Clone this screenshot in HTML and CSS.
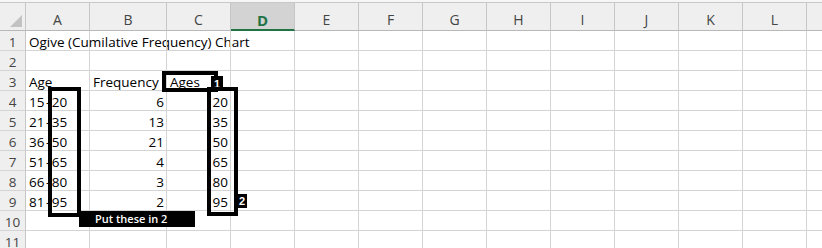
FILE: index.html
```html
<!DOCTYPE html>
<html>
<head>
	<title>Ogive</title>
	<link rel="stylesheet" href="styles.css">
</head>
<body>
	<div class="topline"></div>
	<div class="sheet">
		<div class="row head">
			<div class="rh corner"><span class="tri"></span></div>
			<div class="ch">A</div><div class="ch wide">B</div><div class="ch">C</div><div class="ch sel">D</div>
			<div class="ch">E</div><div class="ch">F</div><div class="ch">G</div><div class="ch">H</div>
			<div class="ch">I</div><div class="ch">J</div><div class="ch">K</div><div class="ch">L</div><div class="ch"></div>
		</div>
		<div class="row">
			<div class="rh">1</div>
			<div class="c">Ogive (Cumilative Frequency) Chart</div><div class="c wide"></div><div class="c"></div><div class="c"></div>
			<div class="c"></div><div class="c"></div><div class="c"></div><div class="c"></div>
			<div class="c"></div><div class="c"></div><div class="c"></div><div class="c"></div><div class="c"></div>
		</div>
		<div class="row">
			<div class="rh">2</div>
			<div class="c"></div><div class="c wide"></div><div class="c"></div><div class="c"></div>
			<div class="c"></div><div class="c"></div><div class="c"></div><div class="c"></div>
			<div class="c"></div><div class="c"></div><div class="c"></div><div class="c"></div><div class="c"></div>
		</div>
		<div class="row">
			<div class="rh">3</div>
			<div class="c">Age</div><div class="c wide">Frequency</div><div class="c">Ages</div><div class="c"></div>
			<div class="c"></div><div class="c"></div><div class="c"></div><div class="c"></div>
			<div class="c"></div><div class="c"></div><div class="c"></div><div class="c"></div><div class="c"></div>
		</div>
		<div class="row">
			<div class="rh">4</div>
			<div class="c range">15 - 20</div><div class="c wide num">6</div><div class="c num">20</div><div class="c"></div>
			<div class="c"></div><div class="c"></div><div class="c"></div><div class="c"></div>
			<div class="c"></div><div class="c"></div><div class="c"></div><div class="c"></div><div class="c"></div>
		</div>
		<div class="row">
			<div class="rh">5</div>
			<div class="c range">21 - 35</div><div class="c wide num">13</div><div class="c num">35</div><div class="c"></div>
			<div class="c"></div><div class="c"></div><div class="c"></div><div class="c"></div>
			<div class="c"></div><div class="c"></div><div class="c"></div><div class="c"></div><div class="c"></div>
		</div>
		<div class="row">
			<div class="rh">6</div>
			<div class="c range">36 - 50</div><div class="c wide num">21</div><div class="c num">50</div><div class="c"></div>
			<div class="c"></div><div class="c"></div><div class="c"></div><div class="c"></div>
			<div class="c"></div><div class="c"></div><div class="c"></div><div class="c"></div><div class="c"></div>
		</div>
		<div class="row">
			<div class="rh">7</div>
			<div class="c range">51 - 65</div><div class="c wide num">4</div><div class="c num">65</div><div class="c"></div>
			<div class="c"></div><div class="c"></div><div class="c"></div><div class="c"></div>
			<div class="c"></div><div class="c"></div><div class="c"></div><div class="c"></div><div class="c"></div>
		</div>
		<div class="row">
			<div class="rh">8</div>
			<div class="c range">66 - 80</div><div class="c wide num">3</div><div class="c num">80</div><div class="c"></div>
			<div class="c"></div><div class="c"></div><div class="c"></div><div class="c"></div>
			<div class="c"></div><div class="c"></div><div class="c"></div><div class="c"></div><div class="c"></div>
		</div>
		<div class="row">
			<div class="rh">9</div>
			<div class="c range">81 - 95</div><div class="c wide num">2</div><div class="c num">95</div><div class="c"></div>
			<div class="c"></div><div class="c"></div><div class="c"></div><div class="c"></div>
			<div class="c"></div><div class="c"></div><div class="c"></div><div class="c"></div><div class="c"></div>
		</div>
		<div class="row">
			<div class="rh">10</div>
			<div class="c"></div><div class="c wide"></div><div class="c"></div><div class="c"></div>
			<div class="c"></div><div class="c"></div><div class="c"></div><div class="c"></div>
			<div class="c"></div><div class="c"></div><div class="c"></div><div class="c"></div><div class="c"></div>
		</div>
		<div class="row">
			<div class="rh">11</div>
			<div class="c"></div><div class="c wide"></div><div class="c"></div><div class="c"></div>
			<div class="c"></div><div class="c"></div><div class="c"></div><div class="c"></div>
			<div class="c"></div><div class="c"></div><div class="c"></div><div class="c"></div><div class="c"></div>
		</div>

		<!-- hand drawn marks on top of the sheet -->
		<div class="box box1"></div>
		<div class="tag tag1">1</div>
		<div class="box box2"></div>
		<div class="tag tag2">2</div>
		<div class="box box3"></div>
		<div class="note">Put these in 2</div>
	</div>
</body>
</html>
```

FILE: styles.css
```css
*{
	margin: 0px;
	padding: 0px;
	box-sizing: border-box;
}
body{
	width: 822px;
	height: 248px;
	overflow: hidden;
	background: #fff;
	font-family: "Open Sans", "Liberation Sans", sans-serif;
	color: #000;
}
.topline{
	height: 3px;
	background: #f6f6f6;
	border-bottom: 1px solid #c8c8c8;
}
.sheet{
	position: relative;
	width: 840px;
}
.row{
	display: flex;
	height: 20px;
}
.row.head{
	height: 28px;
}
.rh{
	width: 26px;
	flex: none;
	background: #efefef;
	border-right: 1px solid #c6c6c6;
	border-bottom: 1px solid #d4d4d4;
	text-align: center;
	font-size: 13.5px;
	line-height: 20px;
	padding-top: 1px;
	color: #444;
}
.head .rh{
	border-bottom: 1px solid #b8b8b8;
	position: relative;
}
.tri{
	position: absolute;
	right: 3px;
	bottom: 3px;
	width: 0;
	height: 0;
	border-left: 12px solid transparent;
	border-bottom: 12px solid #c2c2c2;
}
.ch{
	width: 64px;
	flex: none;
	background: #efefef;
	border-right: 1px solid #c6c6c6;
	border-bottom: 1px solid #b8b8b8;
	text-align: center;
	font-size: 14px;
	line-height: 24px;
	padding-top: 5px;
	color: #444;
}
.ch.wide, .c.wide{
	width: 77px;
}
.ch.sel{
	background: #d3d3d3;
	color: #217346;
	font-weight: bold;
	font-size: 15px;
	border-bottom: 2px solid #217346;
}
.c{
	width: 64px;
	flex: none;
	border-right: 1px solid #d4d4d4;
	border-bottom: 1px solid #d4d4d4;
	font-size: 13.5px;
	line-height: 20px;
	padding: 1px 2px 0 3px;
	white-space: nowrap;
	overflow: visible;
}
.c.range{
	word-spacing: -2px;
}
.c.num{
	text-align: right;
}
.box{
	position: absolute;
	border: 4px solid #000;
}
.box1{
	left: 162px;
	top: 68px;
	width: 56px;
	height: 21px;
}
.box2{
	left: 207px;
	top: 84px;
	width: 31px;
	height: 129px;
}
.box3{
	left: 48px;
	top: 84px;
	width: 33px;
	height: 130px;
}
.tag{
	position: absolute;
	background: #000;
	color: #fff;
	font-family: "Liberation Sans", sans-serif;
	font-weight: bold;
	font-size: 11px;
	line-height: 12px;
	text-align: center;
}
.tag1{
	left: 211px;
	top: 73px;
	width: 12px;
	height: 12px;
	padding-top: 2px;
}
.tag2{
	left: 237px;
	top: 191px;
	width: 10px;
	height: 14px;
	line-height: 15px;
}
.note{
	position: absolute;
	left: 79px;
	top: 208px;
	width: 116px;
	height: 16px;
	padding-left: 16px;
	background: #000;
	color: #fff;
	font-family: "Open Sans", sans-serif;
	font-weight: 600;
	font-size: 11px;
	line-height: 16px;
}
```
